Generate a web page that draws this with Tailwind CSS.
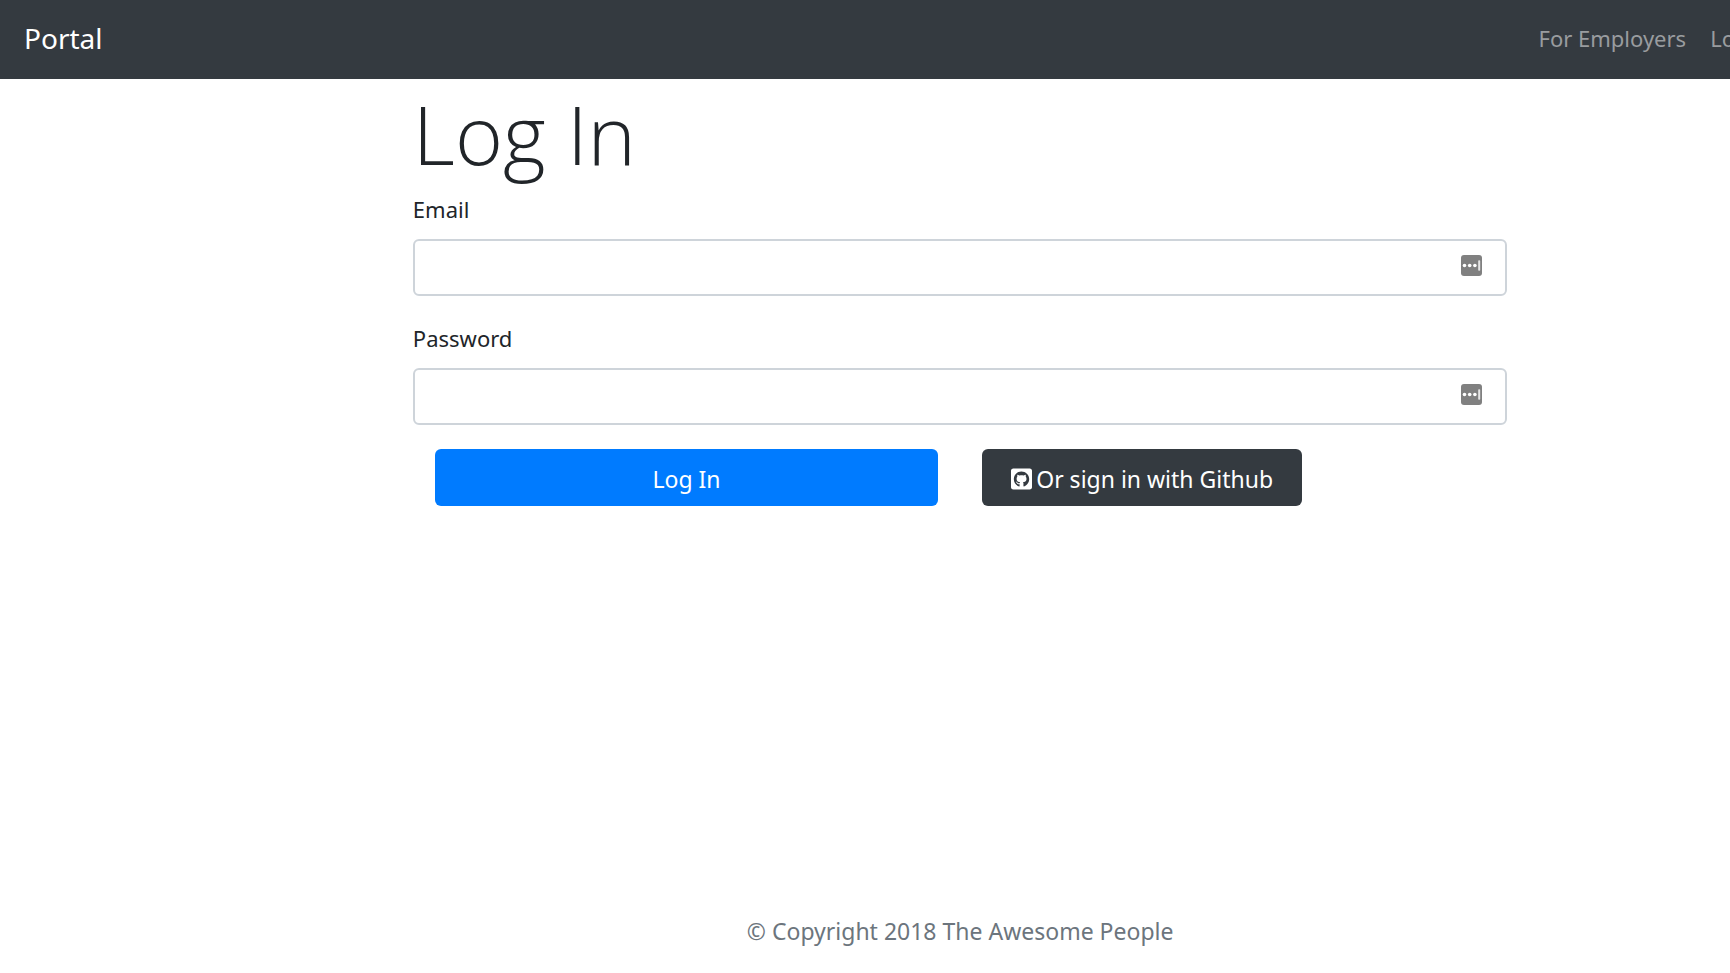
<!DOCTYPE html>
<html lang="en">
<head>
<meta charset="utf-8">
<meta name="viewport" content="width=device-width, initial-scale=1">
<title>Portal</title>
<script src="https://cdn.jsdelivr.net/npm/@tailwindcss/browser@4"></script>
</head>
<body class="overflow-hidden bg-white font-['Noto_Sans',sans-serif] text-[22px] leading-9 text-[#212529]">
<div class="flex min-h-screen w-[111%] flex-col">
  <header class="flex h-[79px] items-center justify-between bg-[#343a40] pb-1 pl-6 pr-[145px]">
    <a href="#" class="text-[28px] text-white">Portal</a>
    <nav class="flex gap-6 text-[#999c9f]">
      <a href="#">For Employers</a>
      <a href="#">Log In</a>
    </nav>
  </header>

  <main class="mx-auto w-[57%] flex-1">
    <h1 class="mb-3 pt-2 font-['Open_Sans',sans-serif] text-[82px] leading-[92px] font-light">Log In</h1>
    <form>
      <div class="mb-6">
        <label for="email" class="mb-3 block">Email</label>
        <div class="relative">
          <input id="email" type="email" class="block h-[57px] w-full rounded-md border-2 border-[#ced4da] bg-white pl-4 pr-14">
          <svg class="absolute right-[25px] top-4 size-[21px]" viewBox="0 0 21 21" aria-hidden="true"><rect width="21" height="21" rx="3" fill="#808080"/><g fill="#fff"><circle cx="3.5" cy="10.5" r="1.8"/><circle cx="8.7" cy="10.5" r="1.8"/><circle cx="13.9" cy="10.5" r="1.8"/><rect x="17.2" y="5.2" width="2" height="10.6" rx=".8" fill="#e6e6e6"/></g></svg>
        </div>
      </div>
      <div class="mb-6">
        <label for="password" class="mb-3 block">Password</label>
        <div class="relative">
          <input id="password" type="password" class="block h-[57px] w-full rounded-md border-2 border-[#ced4da] bg-white pl-4 pr-14">
          <svg class="absolute right-[25px] top-4 size-[21px]" viewBox="0 0 21 21" aria-hidden="true"><rect width="21" height="21" rx="3" fill="#808080"/><g fill="#fff"><circle cx="3.5" cy="10.5" r="1.8"/><circle cx="8.7" cy="10.5" r="1.8"/><circle cx="13.9" cy="10.5" r="1.8"/><rect x="17.2" y="5.2" width="2" height="10.6" rx=".8" fill="#e6e6e6"/></g></svg>
        </div>
      </div>
      <div class="grid grid-cols-2 text-[23px]">
        <div class="px-[22px]">
          <button type="submit" class="h-[57px] w-full rounded-md bg-[#007bff] pt-0.5 text-white">Log In</button>
        </div>
        <div class="px-[22px]">
          <a href="#" class="flex h-[57px] w-[320px] items-center justify-center gap-1 rounded-md bg-[#343a40] pt-0.5 text-white">
            <svg class="h-6 w-[21px]" viewBox="0 0 448 512" fill="currentColor" aria-hidden="true"><path d="M400 32H48C21.5 32 0 53.5 0 80v352c0 26.5 21.5 48 48 48h352c26.5 0 48-21.5 48-48V80c0-26.5-21.5-48-48-48zM277.3 415.7c-8.4 1.5-11.5-3.7-11.5-8 0-5.4.2-33 .2-55.3 0-15.6-5.2-25.5-11.3-30.7 37-4.1 76-9.2 76-73.1 0-18.2-6.5-27.3-17.1-39 1.7-4.3 7.4-22-1.7-45-13.9-4.3-45.7 17.9-45.7 17.9-13.2-3.7-27.5-5.6-41.6-5.6-14.1 0-28.4 1.9-41.6 5.6 0 0-31.8-22.2-45.7-17.9-9.1 22.9-3.5 40.6-1.7 45-10.6 11.7-15.6 20.8-15.6 39 0 63.6 37.3 69 74.3 73.1-4.8 4.3-9.1 11.7-10.6 22.3-9.5 4.3-33.8 11.7-48.3-13.9-9.1-15.8-25.5-17.1-25.5-17.1-16.2-.2-1.1 10.2-1.1 10.2 10.8 5 18.4 24.2 18.4 24.2 9.7 29.7 56.1 19.7 56.1 19.7 0 13.9.2 36.5.2 40.6 0 4.3-3 9.5-11.5 8-66-22.1-112.2-84.9-112.2-158.3 0-91.8 70.2-161.5 162-161.5S388 165.6 388 257.4c.1 73.4-44.7 136.3-110.7 158.3z"/></svg>
            <span>Or sign in with Github</span>
          </a>
        </div>
      </div>
    </form>
  </main>

  <footer class="pb-6 text-center text-[23px] text-[#6c757d]">© Copyright 2018 The Awesome People</footer>
</div>
</body>
</html>
